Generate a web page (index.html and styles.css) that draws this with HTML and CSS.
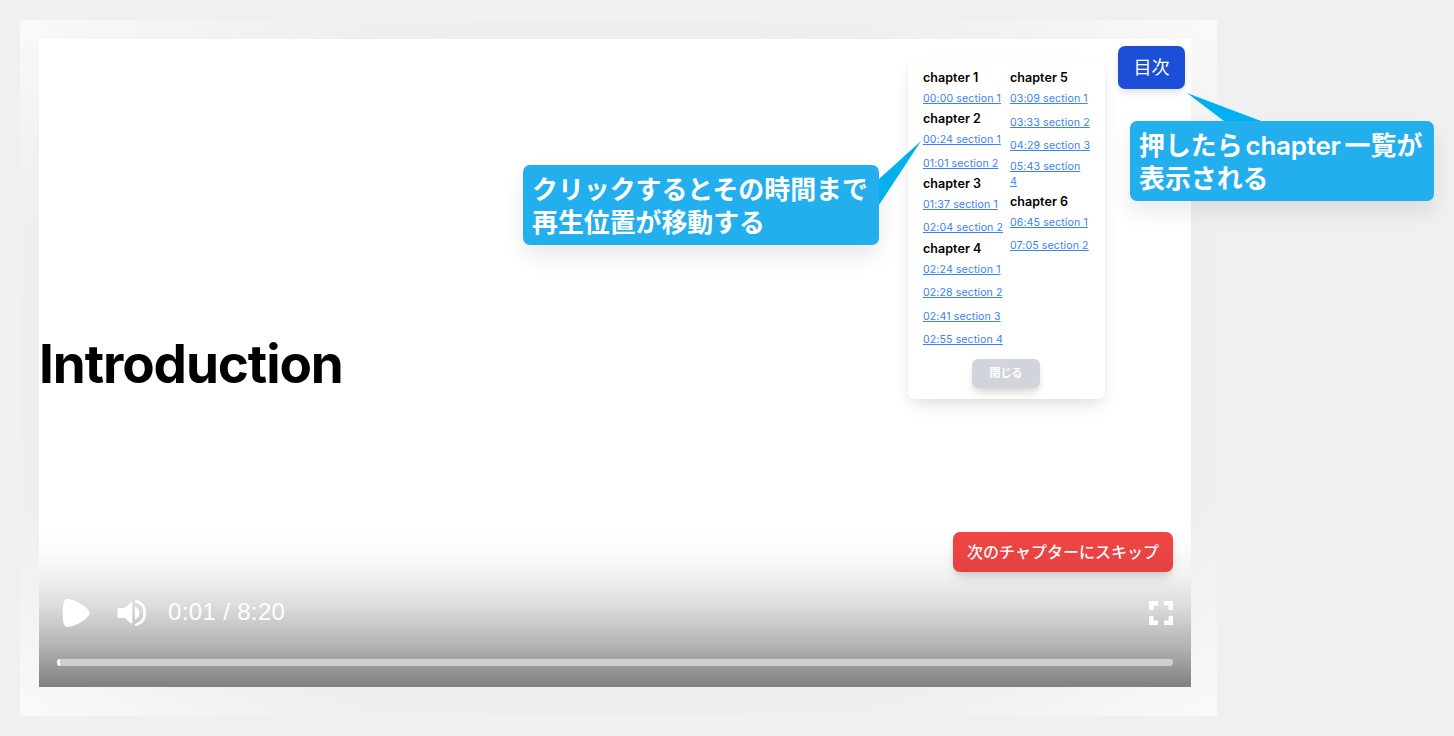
FILE: index.html
```
<!DOCTYPE html>
<html lang="ja">
<head>
    <meta charset="UTF-8">
    <meta name="viewport" content="width=device-width, initial-scale=1.0">
    <title>Chapter Player</title>
    <link rel="stylesheet" href="styles.css">
</head>
<body>
    <div class="frame">
        <div class="player">
            <h1 class="slide-title">Introduction</h1>

            <button class="toc-button" type="button">目次</button>

            <div class="toc">
                <div class="toc-columns">
                    <div class="toc-column">
                        <h2>chapter 1</h2>
                        <ul>
                            <li><a href="#">00:00 section 1</a></li>
                        </ul>
                        <h2>chapter 2</h2>
                        <ul>
                            <li><a href="#">00:24 section 1</a></li>
                            <li><a href="#">01:01 section 2</a></li>
                        </ul>
                        <h2>chapter 3</h2>
                        <ul>
                            <li><a href="#">01:37 section 1</a></li>
                            <li><a href="#">02:04 section 2</a></li>
                        </ul>
                        <h2>chapter 4</h2>
                        <ul>
                            <li><a href="#">02:24 section 1</a></li>
                            <li><a href="#">02:28 section 2</a></li>
                            <li><a href="#">02:41 section 3</a></li>
                            <li><a href="#">02:55 section 4</a></li>
                        </ul>
                    </div>
                    <div class="toc-column">
                        <h2>chapter 5</h2>
                        <ul>
                            <li><a href="#">03:09 section 1</a></li>
                            <li><a href="#">03:33 section 2</a></li>
                            <li><a href="#">04:29 section 3</a></li>
                            <li class="wrapped"><a href="#">05:43 section<br>4</a></li>
                        </ul>
                        <h2>chapter 6</h2>
                        <ul>
                            <li><a href="#">06:45 section 1</a></li>
                            <li><a href="#">07:05 section 2</a></li>
                        </ul>
                    </div>
                </div>
                <button class="close-button" type="button">閉じる</button>
            </div>

            <button class="skip-button" type="button">次のチャプターにスキップ</button>

            <div class="controls">
                <div class="controls-row">
                    <svg class="icon-play" width="28" height="30" viewBox="0 0 28 30">
                        <path d="M5 1C2 1 .7 6 .7 15S2 29 5 29C13 29 27.5 20 27.5 15S13 1 5 1Z" fill="#fff"/>
                    </svg>
                    <svg class="icon-volume" width="30" height="28" viewBox="0 0 30 28">
                        <path d="M1 9H7.5L14 3.5Q15.2 3 15.2 4.5V23.5Q15.2 25 14 24.5L7.5 19H1.5Q.5 19 .5 18V10Q.5 9 1 9Z" fill="#fff"/>
                        <path d="M18 7.5Q22.3 9.5 22.3 14T18 20.5Z" fill="#fff"/>
                        <path d="M19.2 2.3C25.5 4 27.7 9 27.7 14S25.5 24 19.2 25.7" fill="none" stroke="#fff" stroke-width="2.7" stroke-linecap="round"/>
                    </svg>
                    <span class="time">0:01 / 8:20</span>
                    <svg class="icon-fullscreen" width="24" height="24" viewBox="0 0 24 24">
                        <path d="M0 9V0H9V4.5H4.5V9ZM15 0H24V9H19.5V4.5H15ZM0 15H4.5V19.5H9V24H0ZM19.5 15H24V24H15V19.5H19.5Z" fill="#fff"/>
                    </svg>
                </div>
                <div class="progress">
                    <div class="progress-played"></div>
                </div>
            </div>
        </div>
    </div>

    <div class="callout callout-section">
        <svg class="callout-tail" width="42" height="64" viewBox="0 0 42 64">
            <path d="M0 38L42 0L0 64Z" fill="#00b0f0"/>
        </svg>
        クリックするとその時間まで<br>再生位置が移動する
    </div>
    <div class="callout callout-toc">
        <svg class="callout-tail" width="74" height="28" viewBox="0 0 74 28">
            <path d="M0 0L74 28H37Z" fill="#00b0f0"/>
        </svg>
        押したら<span class="latin">chapter</span>一覧が<br>表示される
    </div>
</body>
</html>
```

FILE: styles.css
```
* {
    box-sizing: border-box;
}
body {
    margin: 0;
    padding: 20px;
    height: 736px;
    overflow: hidden;
    background-color: #f0f0f0;
    font-family: Inter, "Noto Sans CJK JP", sans-serif;
}
h1, h2, ul {
    margin: 0;
    padding: 0;
}
button {
    border: none;
    padding: 0;
    color: white;
    font-family: inherit;
    cursor: pointer;
}
.frame {
    width: 1197px;
    height: 696px;
    padding: 19px;
    background: radial-gradient(ellipse farthest-corner, #ececec 0%, #eeeeee 71%, #f3f3f3 85%, #fafafa 100%);
}
.player {
    position: relative;
    display: flex;
    align-items: center;
    width: 1152px;
    height: 648px;
    background-color: white;
}
.slide-title {
    padding-top: 2px;
    font-size: 53px;
    line-height: 64px;
    font-weight: 700;
    letter-spacing: -1.1px;
    color: black;
}
.toc-button {
    position: absolute;
    top: 7px;
    right: 6px;
    width: 67px;
    height: 43px;
    padding-bottom: 3px;
    border-radius: 7px;
    background-color: #1d4ed8;
    font-size: 18px;
    box-shadow: 0 4px 6px rgba(0,0,0,0.1);
}

/* chapter list */
.toc {
    position: absolute;
    top: 19px;
    left: 869px;
    width: 197px;
    height: 341px;
    padding: 11px 15px;
    border-radius: 7px;
    background-color: white;
    box-shadow: 0 9px 18px -3px rgba(0,0,0,0.1), 0 3px 6px rgba(0,0,0,0.03);
}
.toc-columns {
    display: flex;
    gap: 7px;
    height: 290px;
}
.toc-column {
    width: 80px;
}
.toc h2 {
    font-size: 12.5px;
    line-height: 17.7px;
    font-weight: 600;
    letter-spacing: 0.05px;
    white-space: nowrap;
}
.toc ul {
    list-style: none;
}
.toc li {
    display: flex;
    align-items: center;
    min-height: 23.5px;
    padding: 3.9px 0 1.9px;
    font-size: 10.6px;
    line-height: 14.8px;
    letter-spacing: 0.1px;
    white-space: nowrap;
}
.toc li.wrapped {
    padding: 2.9px 0;
}
.toc a {
    color: #3b82f6;
}
.close-button {
    display: block;
    width: 68px;
    height: 29px;
    margin: 0 0 0 49px;
    padding-bottom: 3px;
    border-radius: 6px;
    background-color: #d1d5db;
    font-size: 11px;
    font-weight: 700;
    box-shadow: 0 8px 12px -3px rgba(0,0,0,0.12), 0 3px 5px rgba(0,0,0,0.06);
}

.skip-button {
    position: absolute;
    right: 18px;
    bottom: 115px;
    width: 220px;
    height: 40px;
    padding-bottom: 2px;
    border-radius: 7px;
    background-color: #ef4444;
    font-size: 16px;
    font-weight: 500;
    box-shadow: 0 9px 13px -3px rgba(0,0,0,0.12), 0 3px 5px rgba(0,0,0,0.06);
}

/* player controls */
.controls {
    position: absolute;
    left: 0;
    right: 0;
    bottom: 0;
    height: 160px;
    padding: 71px 18px 0;
    background: linear-gradient(rgba(0,0,0,0) 0%, rgba(0,0,0,0.015) 15%, rgba(0,0,0,0.05) 30%, rgba(0,0,0,0.14) 50%, rgba(0,0,0,0.3) 75%, rgba(0,0,0,0.5) 100%);
    pointer-events: none;
}
.controls-row {
    display: flex;
    align-items: center;
    height: 30px;
}
.icon-play {
    margin-left: 5px;
}
.icon-volume {
    margin-left: 27px;
}
.time {
    margin-left: 21px;
    padding-bottom: 2px;
    color: white;
    font-family: "Liberation Sans", Arial, sans-serif;
    font-size: 24px;
    letter-spacing: 0.35px;
}
.icon-fullscreen {
    margin-left: auto;
}
.progress {
    height: 7px;
    margin-top: 31px;
    border-radius: 3px;
    background-color: rgba(255,255,255,0.5);
    overflow: hidden;
}
.progress-played {
    width: 3px;
    height: 100%;
    background-color: white;
}

/* explanation balloons */
.callout {
    position: absolute;
    height: 80px;
    padding: 8px 9px;
    border-radius: 7px;
    background-color: #23afee;
    color: white;
    font-size: 25.9px;
    line-height: 33px;
    font-weight: 700;
    white-space: nowrap;
    box-shadow: 0 11px 22px rgba(0,0,0,0.09);
}
.callout-section {
    top: 165px;
    left: 523px;
    width: 356px;
}
.callout-toc {
    top: 121px;
    left: 1130px;
    width: 304px;
}
.callout .latin {
    margin: 0 4px 0 3px;
    font-weight: 600;
    letter-spacing: -0.2px;
}
.callout-tail {
    position: absolute;
}
.callout-section .callout-tail {
    top: -24px;
    left: 356px;
}
.callout-toc .callout-tail {
    top: -28px;
    left: 57px;
}
```
